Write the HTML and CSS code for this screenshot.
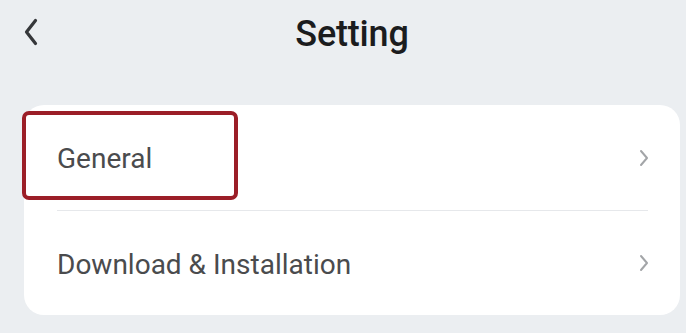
FILE: index.html
```html
<!DOCTYPE html>
<html lang="en">
<head>
<meta charset="utf-8">
<title>Setting</title>
<link rel="stylesheet" href="styles.css">
</head>
<body>
<header class="topbar">
  <svg class="back" width="14" height="28" viewBox="0 0 14 28" aria-hidden="true">
    <polyline points="11.5,2.5 2.5,14 11.5,25.5" fill="none" stroke="#35373a" stroke-width="3.2" stroke-linecap="round" stroke-linejoin="round"/>
  </svg>
  <h1 class="title">Setting</h1>
</header>
<main class="card">
  <div class="row row-first">
    <span class="label">General</span>
    <svg class="chev" width="10" height="20" viewBox="0 0 10 20" aria-hidden="true">
      <polyline points="2,3 8,10 2,17" fill="none" stroke="#a3a5a8" stroke-width="2" stroke-linecap="round" stroke-linejoin="round"/>
    </svg>
    <div class="highlight"></div>
  </div>
  <div class="row">
    <span class="label">Download &amp; Installation</span>
    <svg class="chev" width="10" height="20" viewBox="0 0 10 20" aria-hidden="true">
      <polyline points="2,3 8,10 2,17" fill="none" stroke="#a3a5a8" stroke-width="2" stroke-linecap="round" stroke-linejoin="round"/>
    </svg>
  </div>
</main>
</body>
</html>
```
FILE: styles.css
```css
html, body {
  margin: 0;
  padding: 0;
}
body {
  background: #ebeef1;
  font-family: Roboto, "Liberation Sans", Arial, sans-serif;
  width: 686px;
  height: 333px;
  overflow: hidden;
}
.topbar {
  display: flex;
  align-items: center;
  height: 66px;
  padding: 0 20px 0 24px;
}
.back {
  display: block;
  flex: none;
  margin-top: -2px;
}
.title {
  flex: 1;
  margin: 0;
  text-align: center;
  font-size: 36px;
  line-height: 40px;
  font-weight: 500;
  color: #1b1c1e;
  letter-spacing: -0.2px;
  margin-top: 2px;
}
.card {
  margin: 39px 6px 0 24px;
  background: #ffffff;
  border-radius: 20px;
  height: 210px;
  display: flex;
  flex-direction: column;
}
.row {
  position: relative;
  flex: 1;
  display: flex;
  align-items: center;
  justify-content: space-between;
  margin: 0 32px 0 33px;
}
.row-first {
  border-bottom: 1px solid #e6e8eb;
  flex: 0 0 105px;
}
.label {
  font-size: 28px;
  color: #4a4b4d;
  letter-spacing: 0;
  margin-top: 2px;
}
.chev {
  display: block;
  flex: none;
  margin-right: -1px;
}
.highlight {
  position: absolute;
  left: -35px;
  top: 6px;
  width: 208px;
  height: 81px;
  border: 4px solid #9b1e27;
  border-radius: 7px;
}
```
